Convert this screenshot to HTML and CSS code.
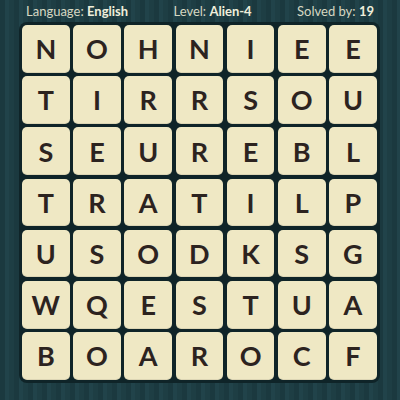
FILE: index.html
```html
<!DOCTYPE html>
<html>
<head>
<meta charset="utf-8">
<link rel="stylesheet" href="styles.css">
</head>
<body>
<div class="screen">
  <div class="header">
    <span>Language: <b>English</b></span>
    <span>Level: <b>Alien-4</b></span>
    <span>Solved by: <b>19</b></span>
  </div>
  <div class="board">
    <div class="tile">N</div><div class="tile">O</div><div class="tile">H</div><div class="tile">N</div><div class="tile">I</div><div class="tile">E</div><div class="tile">E</div>
    <div class="tile">T</div><div class="tile">I</div><div class="tile">R</div><div class="tile">R</div><div class="tile">S</div><div class="tile">O</div><div class="tile">U</div>
    <div class="tile">S</div><div class="tile">E</div><div class="tile">U</div><div class="tile">R</div><div class="tile">E</div><div class="tile">B</div><div class="tile">L</div>
    <div class="tile">T</div><div class="tile">R</div><div class="tile">A</div><div class="tile">T</div><div class="tile">I</div><div class="tile">L</div><div class="tile">P</div>
    <div class="tile">U</div><div class="tile">S</div><div class="tile">O</div><div class="tile">D</div><div class="tile">K</div><div class="tile">S</div><div class="tile">G</div>
    <div class="tile">W</div><div class="tile">Q</div><div class="tile">E</div><div class="tile">S</div><div class="tile">T</div><div class="tile">U</div><div class="tile">A</div>
    <div class="tile">B</div><div class="tile">O</div><div class="tile">A</div><div class="tile">R</div><div class="tile">O</div><div class="tile">C</div><div class="tile">F</div>
  </div>
</div>
</body>
</html>
```
FILE: styles.css
```css
html, body {
  margin: 0;
  padding: 0;
}
.screen {
  width: 400px;
  height: 400px;
  overflow: hidden;
  background-color: #1d3d43;
  background-image: repeating-linear-gradient(90deg, #1b393f 0px, #1b393f 5px, #21434a 5px, #21434a 9px, #1e3e44 9px, #1e3e44 14px);
  font-family: "Lato", "Liberation Sans", sans-serif;
}
.header {
  height: 22px;
  display: flex;
  justify-content: space-between;
  align-items: center;
  padding: 0 26px 0 26px;
  color: #d6d7c2;
  font-size: 13px;
  box-sizing: border-box;
}
.header b {
  font-weight: 700;
  color: #efeedb;
}
.board {
  margin-left: 19px;
  width: 361px;
  box-sizing: border-box;
  padding: 3px;
  background: #0f2428;
  border-radius: 8px;
  display: grid;
  grid-template-columns: repeat(7, 47.6px);
  grid-auto-rows: 47.6px;
  gap: 3.6px;
}
.tile {
  background: #efe8c4;
  border-radius: 5px;
  display: flex;
  align-items: center;
  justify-content: center;
  color: #2c231f;
  font-size: 27px;
  font-weight: 700;
  box-shadow: inset 0 -1px 0 rgba(0,0,0,0.08);
}
```
